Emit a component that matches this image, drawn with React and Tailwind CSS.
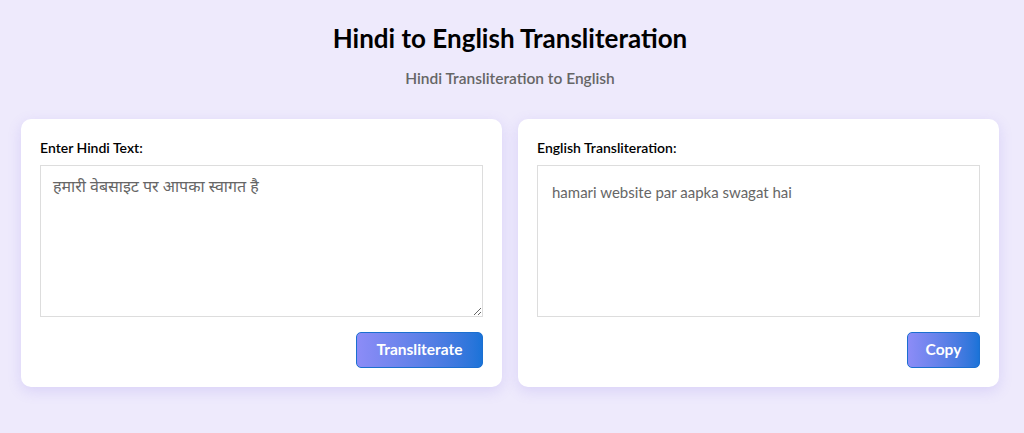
import { useState } from 'react';

const font = { fontFamily: 'Lato, "Noto Sans", sans-serif' };

export default function App() {
  const [hindi, setHindi] = useState('हमारी वेबसाइट पर आपका स्वागत है');
  const output = 'hamari website par aapka swagat hai';

  return (
    <div className="min-h-[433px] bg-[#eeeafc] pl-[21px] pr-[25px] pt-[21px]" style={font}>
      <h1 className="text-center text-[26px] font-bold leading-[34px] text-black">
        Hindi to English Transliteration
      </h1>
      <p className="mt-[13px] text-center text-[15.5px] font-semibold leading-[20px] text-[#666]">
        Hindi Transliteration to English
      </p>

      <div className="mt-[31px] flex gap-[16px]">
        {/* input card */}
        <div className="flex w-[481px] flex-col rounded-[10px] bg-white px-[19px] pt-[20px] pb-[19px] shadow-[0_4px_14px_rgba(120,100,230,0.18)]">
          <label className="text-[14px] font-semibold leading-[18px] text-black">Enter Hindi Text:</label>
          <textarea
            value={hindi}
            onChange={(e) => setHindi(e.target.value)}
            className="mt-[8px] h-[152px] w-full resize border border-[#ddd] px-[12px] pt-[9px] pb-[10px] text-[16px] leading-[22px] text-[#666] outline-none"
            style={{ fontFamily: 'Lato, "Noto Sans", sans-serif' }}
          />
          <div className="mt-[15px] flex justify-end">
            <button className="h-[36px] w-[127px] rounded-[5px] border border-[#1b6fd0] bg-gradient-to-r from-[#8c8cf7] to-[#1a73d8] text-[15.5px] font-bold text-white">
              Transliterate
            </button>
          </div>
        </div>

        {/* output card */}
        <div className="flex w-[481px] flex-col rounded-[10px] bg-white px-[19px] pt-[20px] pb-[19px] shadow-[0_4px_14px_rgba(120,100,230,0.18)]">
          <label className="text-[14px] font-semibold leading-[18px] text-black">English Transliteration:</label>
          <div className="mt-[8px] h-[152px] w-full border border-[#ddd] px-[14px] pt-[16px] text-[15px] leading-[20px] text-[#666]">
            {output}
          </div>
          <div className="mt-[15px] flex justify-end">
            <button className="h-[36px] w-[73px] rounded-[5px] border border-[#1b6fd0] bg-gradient-to-r from-[#8c8cf7] to-[#1a73d8] text-[15.5px] font-bold text-white">
              Copy
            </button>
          </div>
        </div>
      </div>
    </div>
  );
}
